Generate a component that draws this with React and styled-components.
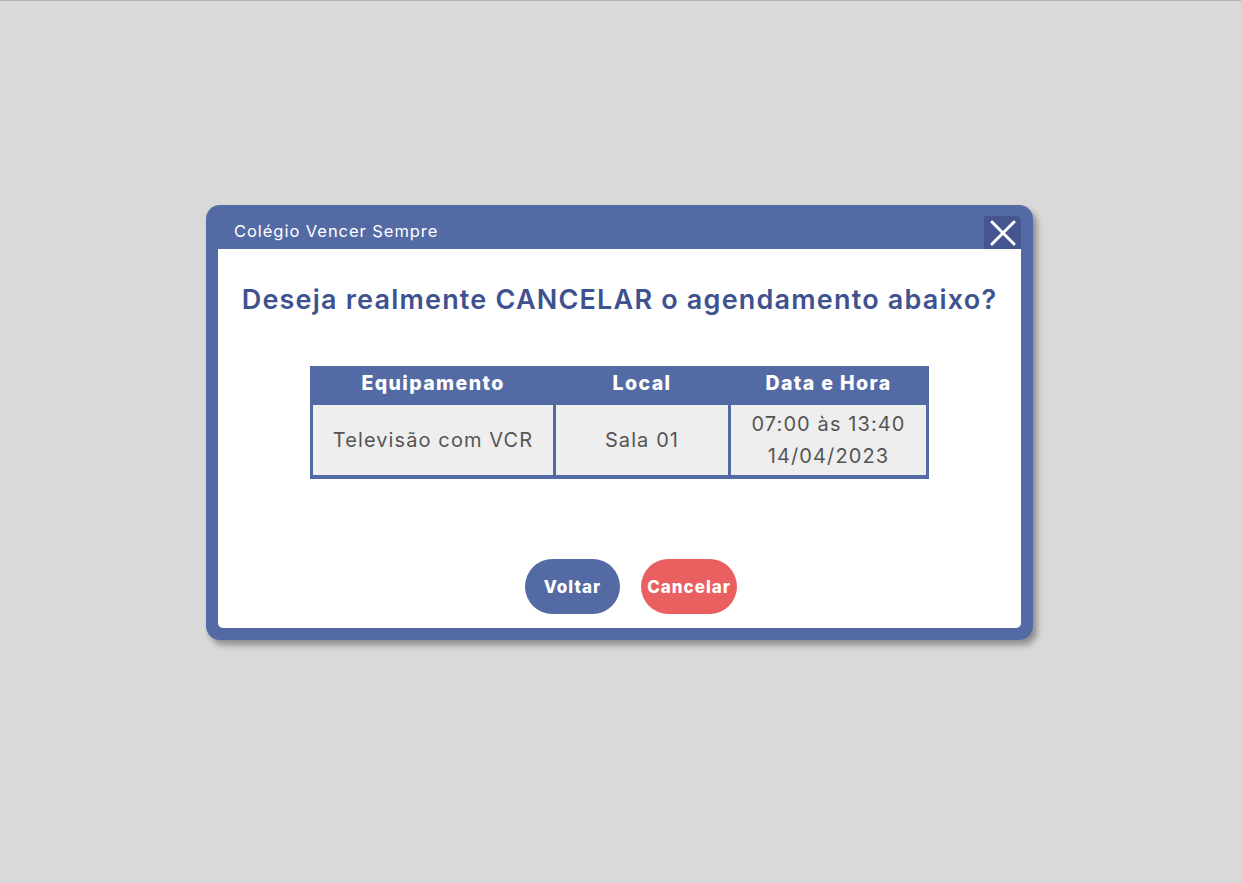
import React from "react";
import styled, { createGlobalStyle } from "styled-components";

const Global = createGlobalStyle`
  html, body { margin: 0; padding: 0; }
  body {
    background: #d9d9d9;
    font-family: "Inter", "Open Sans", "Liberation Sans", sans-serif;
  }
`;

const Page = styled.div`
  min-height: 883px;
  border-top: 1px solid #b4b4b4;
  box-sizing: border-box;
  display: flex;
  justify-content: center;
  padding-top: 204px;
  padding-right: 2px;
`;

const Frame = styled.div`
  width: 827px;
  height: 435px;
  box-sizing: border-box;
  background: #546aa5;
  border-radius: 14px;
  padding: 0 12px 12px 12px;
  display: flex;
  flex-direction: column;
  box-shadow: 4px 5px 6px rgba(0, 0, 0, 0.35);
`;

const Header = styled.div`
  height: 44px;
  display: flex;
  align-items: flex-end;
  justify-content: space-between;
`;

const Title = styled.div`
  color: #ffffff;
  font-size: 16.5px;
  padding-left: 16px;
  padding-bottom: 8px;
  letter-spacing: 0.95px;
`;

const CloseButton = styled.button`
  width: 37px;
  height: 33px;
  border: none;
  padding: 0;
  background: #44558f;
  border-top-right-radius: 6px;
  display: flex;
  align-items: center;
  justify-content: center;
  cursor: pointer;
`;

const Content = styled.div`
  flex: 1;
  background: #ffffff;
  border-radius: 0 0 5px 5px;
  display: flex;
  flex-direction: column;
  align-items: center;
  padding-top: 33px;
`;

const Heading = styled.h1`
  margin: 0;
  font-size: 27px;
  line-height: 36px;
  font-weight: 600;
  color: #3f5290;
  letter-spacing: 1.2px;
`;

const Table = styled.div`
  margin-top: 48px;
  background: #546aa5;
  padding: 0 3px 4px 3px;
  display: grid;
  grid-template-columns: 240px 172px 195px;
  column-gap: 3px;
  row-gap: 2px;
`;

const HeadCell = styled.div`
  height: 37px;
  box-sizing: border-box;
  padding-bottom: 3px;
  display: flex;
  align-items: center;
  justify-content: center;
  color: #ffffff;
  font-weight: 800;
  font-size: 19.5px;
  letter-spacing: 1.4px;
`;

const Cell = styled.div`
  height: 70px;
  background: #eeeeee;
  display: flex;
  flex-direction: column;
  align-items: center;
  justify-content: center;
  color: #555555;
  font-size: 20px;
  line-height: 32px;
  letter-spacing: 1.1px;
  text-align: center;
`;

const Actions = styled.div`
  margin-top: 80px;
  display: flex;
  gap: 21px;
  margin-left: 23px;
`;

const Pill = styled.button`
  width: ${(p) => p.$w}px;
  height: 55px;
  border: none;
  border-radius: 28px;
  background: ${(p) => p.$bg};
  color: #ffffff;
  font-family: inherit;
  font-weight: 800;
  font-size: 17px;
  letter-spacing: 1px;
  cursor: pointer;
`;

export default function App() {
  return (
    <>
      <Global />
      <Page>
        <Frame>
          <Header>
            <Title>Colégio Vencer Sempre</Title>
            <CloseButton aria-label="Fechar">
              <svg width="26" height="26" viewBox="0 0 26 26">
                <path
                  d="M2 2 L24 24 M24 2 L2 24"
                  stroke="#ffffff"
                  strokeWidth="3"
                  strokeLinecap="round"
                />
              </svg>
            </CloseButton>
          </Header>
          <Content>
            <Heading>Deseja realmente CANCELAR o agendamento abaixo?</Heading>
            <Table>
              <HeadCell>Equipamento</HeadCell>
              <HeadCell>Local</HeadCell>
              <HeadCell>Data e Hora</HeadCell>
              <Cell>Televisão com VCR</Cell>
              <Cell>Sala 01</Cell>
              <Cell>
                <span>07:00 às 13:40</span>
                <span>14/04/2023</span>
              </Cell>
            </Table>
            <Actions>
              <Pill $bg="#546aa5" $w={95}>Voltar</Pill>
              <Pill $bg="#ea5f5f" $w={96}>Cancelar</Pill>
            </Actions>
          </Content>
        </Frame>
      </Page>
    </>
  );
}
